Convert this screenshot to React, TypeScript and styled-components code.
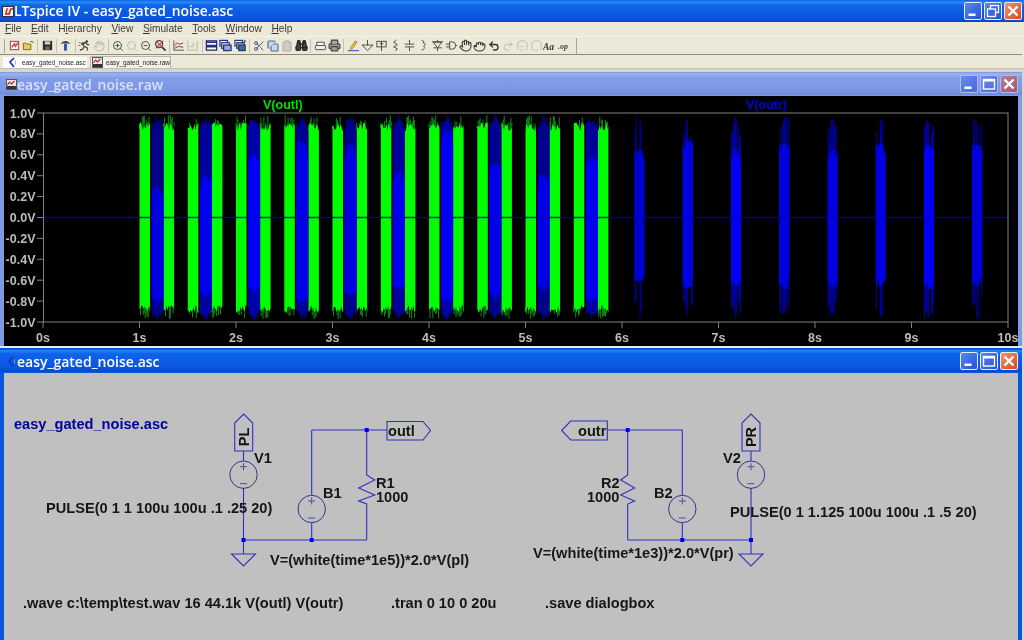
import React from 'react';
import styled, { createGlobalStyle } from 'styled-components';
import { Hand, Grab, ZoomIn, ZoomOut, Search, Scissors, Copy, Clipboard, Binoculars, Printer, Undo2, Redo2 } from 'lucide-react';

const Global = createGlobalStyle`
  html, body { margin: 0; padding: 0; background: #ece9d8; overflow: hidden; }
  #root { width: 1024px; height: 640px; }
`;

const Shell = styled.div`
  width: 1024px; height: 640px; display: flex; flex-direction: column; overflow: hidden;
  background: #ece9d8; font-family: "Liberation Sans", Arial, sans-serif; filter: blur(0.4px);
`;
const AppTitle = styled.div`
  height: 22px; flex: none; display: flex; align-items: center; padding: 0 2px 0 2px; gap: 0;
  background: linear-gradient(180deg, #0a5fe6 0, #2b8ff6 2px, #0f66ea 5px, #0a58e2 14px, #0a55de 19px, #0442c8 22px);
`;
const AppTitleText = styled.div`
  flex: 1; color: #fff; font-family: "Open Sans", sans-serif; font-weight: 600; font-size: 13.9px; line-height: 22px;
  white-space: nowrap;
`;
const Controls = styled.div<{ $gap: number }>`
  display: flex; gap: ${p => p.$gap}px; flex: none;
`;
const WinBtn = styled.div<{ $close?: boolean; $dim?: boolean; $size: number }>`
  width: ${p => p.$size}px; height: ${p => p.$size}px; box-sizing: border-box; border-radius: 2px; display: flex;
  align-items: center; justify-content: center; border: 1px solid ${p => (p.$dim ? '#aebdf0' : '#e6edfb')};
  background: ${p =>
    p.$close
      ? p.$dim
        ? 'linear-gradient(135deg, #b97d92, #a8566f)'
        : 'linear-gradient(135deg, #f0956f, #d8481f)'
      : p.$dim
        ? 'linear-gradient(135deg, #6f8ce8, #4668d8)'
        : 'linear-gradient(135deg, #5b87ee, #2350d8)'};
`;
const MenuBar = styled.div`
  height: 15px; box-sizing: border-box; flex: none; display: flex; align-items: center; padding: 0 0 1px 5px; gap: 9.6px;
  font-size: 10.2px; color: #3a3a3a; border-bottom: 1px solid #f5f3ea;
`;
const MenuItem = styled.span`
  line-height: 13px; white-space: nowrap;
  u { text-underline-offset: 1px; }
`;
const ToolBand = styled.div`
  height: 17px; flex: none; display: flex; align-items: center; padding-left: 4px; border-bottom: 1px solid #8e8c78;
  margin-right: 2px;
`;
const Grip = styled.div`
  width: 1px; height: 14px; background: #a8a694; margin-right: 2px; flex: none;
`;
const Tool = styled.span<{ $off?: boolean }>`
  width: 14.1px; height: 14px; flex: none; display: flex; align-items: center; justify-content: center;
  opacity: ${p => (p.$off ? 0.35 : 0.9)};
`;
const Sep = styled.span`
  width: 1px; height: 14px; flex: none; background: #c4c2ae; margin: 0 1.9px;
`;
const EndLine = styled.span`
  width: 1px; height: 16px; flex: none; background: #a8a694; margin-left: 4px;
`;
const TabStrip = styled.div`
  height: 14px; box-sizing: border-box; flex: none; display: flex; align-items: flex-end; padding: 1px 0 0 2px; gap: 2px;
  background: #ece9d8; border-bottom: 1px solid #c2c0b2;
`;
const Tab = styled.div<{ $active?: boolean; $w: number }>`
  width: ${p => p.$w}px; height: 12px; box-sizing: border-box; display: flex; align-items: center;
  gap: ${p => (p.$active ? 5 : 3)}px; padding-left: ${p => (p.$active ? 5 : 1)}px; font-size: 6.4px; color: #222;
  white-space: nowrap; background: ${p => (p.$active ? '#fff' : '#f4f2e8')};
  border: 1px solid ${p => (p.$active ? '#ece9d8' : '#b8b6a6')}; border-bottom: none;
`;
const Mdi = styled.div`
  flex: 1; min-height: 0; display: flex; flex-direction: column; padding: 3px 2px 0 0; background: #d8d6ca;
`;
const Win = styled.div<{ $active?: boolean; $h?: number }>`
  ${p => (p.$h ? `height:${p.$h}px;flex:none;` : 'flex:1;min-height:0;')}
  display: flex; flex-direction: column; box-sizing: border-box;
  padding: ${p => (p.$active ? '2px 4px 0 4px' : '1px 4px 0 4px')};
  background: ${p => (p.$active ? '#0a55de' : '#7f9be6')};
  border-bottom: ${p => (p.$active ? '0' : '2px solid #e8ecf8')};
`;
const WinTitle = styled.div<{ $active?: boolean }>`
  height: 22px; flex: none; display: flex; align-items: center; margin: 0 -4px; padding: 0 4px 0 5px;
  background: ${p =>
    p.$active
      ? 'linear-gradient(180deg, #2a88f4 0, #0d63e8 4px, #0a58e2 16px, #0648d2 22px)'
      : 'linear-gradient(180deg, #9fb5ee 0, #839ee8 5px, #7b97e4 17px, #6f8bde 22px)'};
`;
const WinTitleText = styled.div<{ $active?: boolean }>`
  flex: 1; color: ${p => (p.$active ? '#fff' : '#d8e0f8')}; font-family: "Open Sans", sans-serif; font-weight: 600;
  font-size: 14px; white-space: nowrap;
`;
const TitleIcon = styled.span`
  width: 12px; height: 12px; flex: none; display: flex; align-items: center; justify-content: center;
`;
const PlotBody = styled.div`
  flex: 1; min-height: 0; margin-top: 1px; background: #000;
`;
const SchemBody = styled.div`
  flex: 1; min-height: 0; margin-top: 1px; background: #c0c0c0;
`;
const Drawing = styled.svg`
  display: block; width: 100%; height: 100%; font-family: "Liberation Sans", Arial, sans-serif;
`;

/* ---------- small glyphs ---------- */
const S: React.FC<{ children: React.ReactNode; w?: number }> = ({ children, w = 13 }) => (
  <svg width={w} height={w} viewBox="0 0 14 14" fill="none" strokeWidth={1}>{children}</svg>
);
const L = { size: 12, strokeWidth: 1.8 } as const;

const tools: (null | { n: string; off?: boolean; g: React.ReactNode })[] = [
  { n: 'new', g: <S><rect x="2.5" y="2.5" width="9" height="9" fill="#fff" stroke="#7a3030" /><path d="M4 9L7 5l1 3 3-4" stroke="#d01818" strokeWidth={1.4} /></S> },
  { n: 'open', g: <S><path d="M1.5 11.5V4.5h3l1 1h4v6z" fill="#e8c84a" stroke="#6a5a10" /><path d="M9 3q2-1.5 3.5 1" stroke="#333" /></S> },
  null,
  { n: 'save', g: <S><rect x="2" y="2" width="10" height="10" fill="#151515" /><rect x="4" y="2.5" width="6" height="3.5" fill="#c8c8c8" /><rect x="4.5" y="8" width="5" height="4" fill="#555" /></S> },
  null,
  { n: 'hammer', g: <S><path d="M1.5 5.5Q7-1 12.5 5.5L9 4.5H5z" fill="#222" /><rect x="5.5" y="5" width="3" height="7.5" fill="#0c3aa8" /></S> },
  null,
  { n: 'run', g: <S><circle cx="9.5" cy="2.6" r="1.3" fill="#222" /><path d="M2 12l3-1 2-3-2-2 3-2.5 2 2.5h2M7 8l3 1.5 0 3M8 4L5 4 3.5 6" stroke="#222" strokeWidth={1.2} /><path d="M1 4h2M.5 7h2" stroke="#b83030" /></S> },
  { n: 'halt', off: true, g: <Hand {...L} color="#555" /> },
  null,
  { n: 'zin', g: <ZoomIn {...L} color="#1c3a28" /> },
  { n: 'zarea', off: true, g: <Search {...L} color="#555" /> },
  { n: 'zout', g: <ZoomOut {...L} color="#1c3a28" /> },
  { n: 'zfit', g: <S><circle cx="5.5" cy="5.5" r="3.8" stroke="#1c3a28" strokeWidth={1.3} /><path d="M8.5 8.5L12.5 12.5" stroke="#222" strokeWidth={2} /><path d="M2 2l8 8M10 2l-8 8" stroke="#c02020" strokeWidth={1.2} /></S> },
  null,
  { n: 'plot', g: <S><path d="M2 1.5v10.5h11" stroke="#444" /><path d="M3 5h9M3 8h9" stroke="#d8a0a0" /><path d="M3 7l3-3 2 2 4-2" stroke="#b02020" /><path d="M3 10l4-2 5 1" stroke="#304098" /></S> },
  { n: 'plot2', off: true, g: <S><path d="M2 1.5v10.5h11M12 2v9" stroke="#555" /><path d="M4 8h4V4" stroke="#555" /></S> },
  null,
  { n: 'tile', g: <S><rect x="1.5" y="2" width="11" height="10" fill="#fff" stroke="#0a1a7a" strokeWidth={1.4} /><path d="M1.5 3.5h11M1.5 7h11M1.5 8.5h11" stroke="#0a1a7a" strokeWidth={1.4} /></S> },
  { n: 'casc', g: <S><rect x="1" y="1.5" width="8" height="6" fill="#fff" stroke="#0a1a7a" strokeWidth={1.3} /><rect x="3" y="4" width="8" height="6" fill="#fff" stroke="#0a1a7a" strokeWidth={1.3} /><rect x="5" y="6.5" width="8" height="6" fill="#8aa0e0" stroke="#0a1a7a" strokeWidth={1.3} /></S> },
  { n: 'close', g: <S><rect x="1" y="1.5" width="8" height="6" fill="#fff" stroke="#0a2a6a" strokeWidth={1.3} /><rect x="3" y="4" width="8" height="6" fill="#aac" stroke="#0a2a6a" strokeWidth={1.3} /><rect x="5" y="6.5" width="7" height="6" fill="#2c5a8a" stroke="#0a2a6a" strokeWidth={1.3} /><path d="M10.5 1l2 2.5M12.5 1l-2 2.5" stroke="#333" /></S> },
  null,
  { n: 'cut', g: <Scissors {...L} color="#303878" /> },
  { n: 'copy', g: <Copy size={12} strokeWidth={2.2} color="#3a5a90" fill="#c8d4ee" /> },
  { n: 'paste', off: true, g: <Clipboard size={12} strokeWidth={2.2} color="#444" fill="#999" /> },
  { n: 'find', g: <Binoculars size={13} strokeWidth={2.6} color="#111" fill="#333" /> },
  null,
  { n: 'psetup', g: <S><path d="M3 9V3.5h8V9" fill="#fff" stroke="#333" /><rect x="1.5" y="7" width="11" height="4.5" rx="1" fill="#eee" stroke="#333" /></S> },
  { n: 'print', g: <Printer size={13} strokeWidth={2.2} color="#333" fill="#9a9a9a" /> },
  null,
  { n: 'pen', g: <S><path d="M4 9l5-7 2 1.3-5 7-2.3.6z" fill="#e8c020" stroke="#806000" strokeWidth={.7} /><path d="M1 12.5h12" stroke="#3a3ab8" strokeWidth={1.2} /></S> },
  { n: 'gnd', g: <S><path d="M7 1v6M1 6.5h12L7 12.5z" stroke="#333" /></S> },
  { n: 'lbl', g: <S><rect x="2" y="2.5" width="10" height="6" stroke="#333" /><path d="M7 2.5V13M5 5h4" stroke="#333" /></S> },
  { n: 'res', g: <S><path d="M8 1L5 3.5 9 6 5 8.5 9 10.5 7 13" stroke="#333" /></S> },
  { n: 'cap', g: <S><path d="M7 1v4.5M2 5.5h10M2 8.5h10M7 8.5V13" stroke="#333" /></S> },
  { n: 'ind', g: <S><path d="M5 1.5q4 1 2 3q4 1.5 0 3.5q3 2-2 4" stroke="#333" /></S> },
  { n: 'dio', g: <S><path d="M1 3h12M2.5 3.5h9L7 9.5zM7 9.5V13M7 1v2M2.5 9.5h9" stroke="#333" /></S> },
  { n: 'comp', g: <S><path d="M5 3h2.5a4 4 0 0 1 0 8H5zM1 5.5h4M1 8.5h4M11.5 7H13" stroke="#333" /></S> },
  { n: 'move', g: <Hand size={13} strokeWidth={2} color="#222" /> },
  { n: 'drag', g: <Grab size={13} strokeWidth={2} color="#222" /> },
  { n: 'undo', g: <Undo2 size={12} strokeWidth={2.6} color="#222" /> },
  { n: 'redo', off: true, g: <Redo2 {...L} color="#555" /> },
  { n: 'txt1', off: true, g: <S><path d="M2 12V4l3-2h5l2 2v8" stroke="#666" /><path d="M4 8h6M4 12h6" stroke="#666" strokeDasharray="2 1" /></S> },
  { n: 'txt2', off: true, g: <S><path d="M2 12V4l3-2h5l2 2v8" stroke="#666" /><path d="M4 12h6" stroke="#666" strokeDasharray="2 1" /></S> },
  { n: 'aa', g: <S w={14}><text x="0" y="10.5" fontFamily="Liberation Serif, serif" fontStyle="italic" fontWeight={700} fontSize="9.5" fill="#222">Aa</text></S> },
  { n: 'op', g: <S w={14}><text x="1" y="9.5" fontFamily="Liberation Serif, serif" fontStyle="italic" fontWeight={700} fontSize="8" fill="#333">.op</text></S> },
];

const PlotIcon = () => (
  <svg width="11" height="11" viewBox="0 0 11 11" fill="none">
    <rect x=".5" y=".5" width="10" height="10" fill="#e8e8e8" stroke="#555" />
    <rect x="1" y="7" width="9" height="3" fill="#333" />
    <path d="M1.5 6l2-3 2 2 3-3" stroke="#c02020" strokeWidth="1.1" />
  </svg>
);
const SchemIcon = () => (
  <svg width="9" height="11" viewBox="0 0 9 11" fill="none">
    <path d="M6 1L2 5l4 5" stroke="#1a30d0" strokeWidth="1.7" />
    <path d="M7.5 3.5v4" stroke="#c8a040" strokeWidth=".8" />
  </svg>
);
const Logo = () => (
  <svg width="12" height="13" viewBox="0 0 13 13">
    <rect x=".5" y="1" width="12" height="11" fill="#f4f0e8" stroke="#222" />
    <path d="M3 10L5 3h1.5L5 8.5h2L9 3h3v1.5H9.800L8.400 10H3z" fill="#c02018" />
  </svg>
);

const MinG = () => (
  <svg width="14" height="14" viewBox="0 0 14 14"><rect x="2.5" y="9.5" width="7" height="2.5" fill="#fff" /></svg>
);
const MaxG = () => (
  <svg width="14" height="14" viewBox="0 0 14 14" fill="none"><rect x="1.5" y="2.5" width="11" height="9.5" stroke="#fff" strokeWidth="1.4" /><path d="M1.5 3.5h11" stroke="#fff" strokeWidth="2" /></svg>
);
const RestoreG = () => (
  <svg width="14" height="14" viewBox="0 0 14 14" fill="none"><rect x="4.5" y="1.5" width="8" height="7" stroke="#fff" strokeWidth="1.3" /><rect x="1.5" y="5" width="8" height="7.5" fill="#3a66e0" stroke="#fff" strokeWidth="1.3" /></svg>
);
const CloseG = () => (
  <svg width="14" height="14" viewBox="0 0 14 14" fill="none"><path d="M2.5 2.5l9 9M11.5 2.5l-9 9" stroke="#fff" strokeWidth="2.4" /></svg>
);

/* ---------- waveform generation ---------- */
const rng = (seed: number) => () => {
  seed = (seed + 0x6d2b79f5) | 0;
  let t = Math.imul(seed ^ (seed >>> 15), 1 | seed);
  t = (t + Math.imul(t ^ (t >>> 7), 61 | t)) ^ t;
  return ((t ^ (t >>> 14)) >>> 0) / 4294967296;
};
const X = (t: number) => 43 + 96.5 * t;
const MID = 217.5;

function greenBurst(n: number) {
  const r = rng(100 + n);
  const x0 = X(1 + 0.25 * n);
  const w = 10.5;
  const cols = 11;
  let spikes = '';
  const pts: string[] = [];
  const ptsB: string[] = [];
  for (let i = 0; i <= cols; i++) {
    const x = x0 + (i / cols) * w;
    const t = 122 + r() * 9;
    const b = 305 + r() * 8;
    pts.push(`${x.toFixed(1)} ${t.toFixed(1)}`);
    ptsB.unshift(`${x.toFixed(1)} ${b.toFixed(1)}`);
    const edge = i === 0 || i === cols ? 6 : 0;
    if (r() > 0.5) spikes += `M${x.toFixed(1)} ${t.toFixed(1)}V${(115 + edge + r() * 9).toFixed(1)}`;
    if (r() > 0.5) spikes += `M${x.toFixed(1)} ${b.toFixed(1)}V${(319 - edge - r() * 6).toFixed(1)}`;
  }
  return { fill: `M${pts.join('L')}L${ptsB.join('L')}Z`, spikes };
}

const overlapTop = [190, 178, 157, 145, 147, 175, 133, 167, 177, 160];
function blueOverlap(n: number) {
  const r = rng(500 + n);
  const x0 = X(1.125 + 0.5 * n);
  const w = 11;
  const solidT = overlapTop[n];
  const solidB = 298 - (n % 3) * 6;
  let dark = '';
  let bright = '';
  for (let i = 0; i <= w; i++) {
    const x = (x0 + i + 0.5).toFixed(1);
    const e = 1 - Math.abs((2 * i) / w - 1);
    dark += `M${x} ${(114 + r() * 8 + (1 - e) * 8).toFixed(1)}V${(321 - r() * 6 - (1 - e) * 6).toFixed(1)}`;
    bright += `M${x} ${(solidT + r() * 18 * (1 - e) - 4).toFixed(1)}V${(solidB + r() * 10 * e).toFixed(1)}`;
  }
  return { dark, bright };
}

function blueSolo(n: number) {
  const r = rng(900 + n);
  const x0 = X(6.125 + 0.5 * n) + 0.5;
  const w = 9;
  let thin = '';
  let core = '';
  const a = 138 + r() * 12;
  const b = 280 + r() * 12;
  for (let i = 0; i <= w; i++) {
    const x = (x0 + i + 0.5).toFixed(1);
    const e = 1 - Math.abs((2 * i) / w - 1);
    const up = 116 + r() * 24 * (1.2 - e);
    const dn = 319 - r() * 24 * (1.2 - e);
    if (r() > 0.35) thin += `M${x} ${up.toFixed(1)}V${dn.toFixed(1)}`;
    core += `M${x} ${(a + r() * 14 * (1 - e)).toFixed(1)}V${(b - r() * 14 * (1 - e)).toFixed(1)}`;
  }
  return { thin, core };
}

const greens = Array.from({ length: 20 }, (_, i) => greenBurst(i));
const overlaps = Array.from({ length: 10 }, (_, i) => blueOverlap(i));
const solos = Array.from({ length: 8 }, (_, i) => blueSolo(i));
const yLabels = ['1.0V', '0.8V', '0.6V', '0.4V', '0.2V', '0.0V', '-0.2V', '-0.4V', '-0.6V', '-0.8V', '-1.0V'];

const Plot = () => (
  <Drawing viewBox="4 96 1014 250" preserveAspectRatio="none" fill="none">
    {greens.map((g, i) => (
      <g key={i}>
        <path d={g.spikes} stroke="#0f8a18" strokeWidth={1} />
        <path d={g.fill} fill="#00ff00" />
      </g>
    ))}
    {overlaps.map((o, i) => (
      <g key={i}>
        <path d={o.dark} stroke="#0000b8" strokeWidth={1} />
        <path d={o.bright} stroke="#0000ff" strokeWidth={1} />
      </g>
    ))}
    {solos.map((o, i) => (
      <g key={i}>
        <path d={o.thin} stroke="#0000d8" strokeWidth={1} strokeOpacity={0.75} />
        <path d={o.core} stroke="#0000ff" strokeWidth={1} />
      </g>
    ))}
    <path d={`M43 ${MID}H1008`} stroke="#0000b0" strokeOpacity={0.75} strokeWidth={1.4} />
    <rect x="43.5" y="113" width="964.5" height="209" stroke="#808080" strokeWidth={1} />
    {yLabels.map((l, i) => {
      const y = 113 + i * 20.9;
      return (
        <g key={l}>
          <path d={`M37 ${y}H43`} stroke="#808080" />
          <text x="35.5" y={y + 4.5} textAnchor="end" fontSize="12.5" fontWeight={700} fill="#bcbcbc">{l}</text>
        </g>
      );
    })}
    {Array.from({ length: 11 }, (_, i) => {
      const x = X(i);
      return (
        <g key={i}>
          <path d={`M${x} 322V328`} stroke="#808080" />
          <text x={x} y="341.5" textAnchor="middle" fontSize="12.5" fontWeight={700} fill="#bcbcbc">{i}s</text>
        </g>
      );
    })}
    <text x="263" y="108.5" fontSize="12.5" fontWeight={700} fill="#00e000">V(outl)</text>
    <text x="746" y="108.5" fontSize="12.5" fontWeight={700} fill="#0000d8">V(outr)</text>
  </Drawing>
);

/* ---------- schematic ---------- */
const W = '#3030c0';
const Source = ({ cx, cy }: { cx: number; cy: number }) => (
  <g>
    <circle cx={cx} cy={cy} r={13.7} stroke="#34348c" strokeWidth={1} fill="none" />
    <path d={`M${cx - 3.5} ${cy - 8}h7M${cx} ${cy - 11.5}v7M${cx - 3.5} ${cy + 9}h7`} stroke="#4a4aa8" strokeWidth={1} />
  </g>
);
const Gnd = ({ x }: { x: number }) => (
  <path d={`M${x} 540V554M${x - 12} 554H${x + 12}L${x} 566Z`} stroke={W} strokeWidth={1.1} fill="none" />
);
const Dot = ({ x, y }: { x: number; y: number }) => <rect x={x - 2} y={y - 2} width="4" height="4" fill="#0000f0" />;
const Zig = ({ x, d }: { x: number; d: number }) => (
  <path d={`M${x} 430V475L${x + d} 480L${x - d} 488L${x + d} 495L${x - d} 501L${x} 504V540`} stroke={W} strokeWidth={1.1} fill="none" />
);
const Pin = ({ x, label }: { x: number; label: string }) => (
  <g>
    <path d={`M${x - 9} 451V423L${x} 414L${x + 9} 423V451Z`} stroke={W} strokeWidth={1.1} fill="none" />
    <text x={x} y={437} fontSize="14.5" fontWeight={700} fill="#111" textAnchor="middle" dominantBaseline="central" transform={`rotate(-90 ${x} 437)`}>{label}</text>
  </g>
);
const T: React.FC<{ x: number; y: number; c?: string; children: string }> = ({ x, y, c = '#161616', children }) => (
  <text x={x} y={y} fontSize="14.6" fontWeight={700} fill={c} dominantBaseline="central">{children}</text>
);

const Schematic = () => (
  <Drawing viewBox="4 373 1014 267" preserveAspectRatio="none" fill="none">
    <path d="M243.5 451V461M243.5 488V540H366.7M311.7 430V495M311.7 523V540M311.7 430H387" stroke={W} strokeWidth={1.1} />
    <Zig x={366.7} d={8} />
    <path d="M607 430H682.3V495M682.3 523V540M627.7 540H751M751 451V461M751 488V540" stroke={W} strokeWidth={1.1} />
    <Zig x={627.7} d={-7} />
    <Source cx={243.5} cy={474.7} />
    <Source cx={311.7} cy={509} />
    <Source cx={682.3} cy={509} />
    <Source cx={751} cy={474.7} />
    <Gnd x={243.5} />
    <Gnd x={751} />
    <Pin x={243.7} label="PL" />
    <Pin x={751} label="PR" />
    <path d="M387 421.5H423L430.5 430.5L423 440H387Z" stroke={W} strokeWidth={1.1} />
    <path d="M561.7 430.5L570.7 421H607.3V440H570.7Z" stroke={W} strokeWidth={1.1} />
    <Dot x={243.5} y={540} /><Dot x={311.7} y={540} /><Dot x={366.7} y={430} />
    <Dot x={627.7} y={430} /><Dot x={682.3} y={540} /><Dot x={751} y={540} />
    <T x={14} y={424} c="#0000a0">easy_gated_noise.asc</T>
    <T x={388} y={430.5}>outl</T>
    <T x={578} y={430.5}>outr</T>
    <T x={254} y={458}>V1</T>
    <T x={323} y={493}>B1</T>
    <T x={376} y={483}>R1</T>
    <T x={376} y={497}>1000</T>
    <T x={723} y={458}>V2</T>
    <T x={654} y={493}>B2</T>
    <T x={601} y={483}>R2</T>
    <T x={587} y={497}>1000</T>
    <T x={46} y={508}>PULSE(0 1 1 100u 100u .1 .25 20)</T>
    <T x={730} y={512}>PULSE(0 1 1.125 100u 100u .1 .5 20)</T>
    <T x={270} y={560}>V=(white(time*1e5))*2.0*V(pl)</T>
    <T x={533} y={553}>V=(white(time*1e3))*2.0*V(pr)</T>
    <T x={23} y={603}>.wave c:\temp\test.wav 16 44.1k V(outl) V(outr)</T>
    <T x={391} y={603}>.tran 0 10 0 20u</T>
    <T x={545} y={603}>.save dialogbox</T>
  </Drawing>
);

const menus: [string, string, string][] = [
  ['', 'F', 'ile'], ['', 'E', 'dit'], ['H', 'i', 'erarchy'], ['', 'V', 'iew'],
  ['', 'S', 'imulate'], ['', 'T', 'ools'], ['', 'W', 'indow'], ['', 'H', 'elp'],
];

export default function App() {
  return (
    <Shell>
      <Global />
      <AppTitle>
        <Logo />
        <AppTitleText>LTspice IV - easy_gated_noise.asc</AppTitleText>
        <Controls $gap={2}>
          <WinBtn $size={18}><MinG /></WinBtn>
          <WinBtn $size={18}><RestoreG /></WinBtn>
          <WinBtn $size={18} $close><CloseG /></WinBtn>
        </Controls>
      </AppTitle>
      <MenuBar>
        {menus.map(([a, b, c]) => (
          <MenuItem key={a + b + c}>{a}<u>{b}</u>{c}</MenuItem>
        ))}
      </MenuBar>
      <ToolBand>
        <Grip />
        {tools.map((t, i) => (t ? <Tool key={t.n} $off={t.off}>{t.g}</Tool> : <Sep key={i} />))}
        <EndLine />
      </ToolBand>
      <TabStrip>
        <Tab $active $w={86}><SchemIcon />easy_gated_noise.asc</Tab>
        <Tab $w={81}><PlotIcon />easy_gated_noise.raw</Tab>
      </TabStrip>
      <Mdi>
        <Win $h={276}>
          <WinTitle>
            <TitleIcon><PlotIcon /></TitleIcon>
            <WinTitleText>easy_gated_noise.raw</WinTitleText>
            <Controls $gap={2}>
              <WinBtn $size={18} $dim><MinG /></WinBtn>
              <WinBtn $size={18} $dim><MaxG /></WinBtn>
              <WinBtn $size={18} $dim $close><CloseG /></WinBtn>
            </Controls>
          </WinTitle>
          <PlotBody><Plot /></PlotBody>
        </Win>
        <Win $active>
          <WinTitle $active>
            <TitleIcon><SchemIcon /></TitleIcon>
            <WinTitleText $active>easy_gated_noise.asc</WinTitleText>
            <Controls $gap={2}>
              <WinBtn $size={18}><MinG /></WinBtn>
              <WinBtn $size={18}><MaxG /></WinBtn>
              <WinBtn $size={18} $close><CloseG /></WinBtn>
            </Controls>
          </WinTitle>
          <SchemBody><Schematic /></SchemBody>
        </Win>
      </Mdi>
    </Shell>
  );
}
